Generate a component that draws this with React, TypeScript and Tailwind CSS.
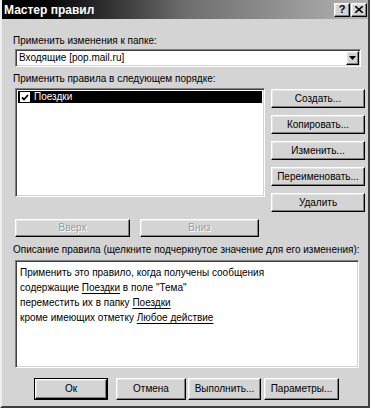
import React from 'react';

const raised =
  'border border-t-white border-l-white border-r-black border-b-black shadow-[inset_-1px_-1px_0_#808080,inset_1px_1px_0_#e6e6e6]';
const sunken =
  'border border-t-[#808080] border-l-[#808080] border-r-white border-b-white shadow-[inset_1px_1px_0_#404040,inset_-1px_-1px_0_#d4d4d4]';

const Btn: React.FC<{ label: string; className?: string; disabled?: boolean }> = ({ label, className = '', disabled }) => (
  <div
    className={`flex items-center justify-center bg-[#d4d4d4] text-[10px] leading-none ${raised} ${
      disabled ? 'text-[#9a9a9a] [text-shadow:1px_1px_0_#ffffff]' : 'text-black'
    } ${className}`}
  >
    {label}
  </div>
);

const Link: React.FC<{ children: React.ReactNode }> = ({ children }) => (
  <span className="underline underline-offset-2">{children}</span>
);

export default function App() {
  const sideButtons = ['Создать...', 'Копировать...', 'Изменить...', 'Переименовать...', 'Удалить'];

  return (
    <div className="w-[371px] h-[410px] bg-white font-['Liberation_Sans',Arial,sans-serif]">
      <div className="w-[370px] h-[408px] bg-[#d4d4d4] border-l-2 border-l-[#eeeeee] border-r-2 border-r-[#404040] border-b-2 border-b-[#404040] flex flex-col">
        {/* title bar */}
        <div className="h-[19px] flex items-center justify-between pl-[2px] pr-[1px] bg-gradient-to-r from-black via-[#6e6e6e] to-[#b4b4b4]">
          <span className="text-white font-bold text-[12px] leading-none">Мастер правил</span>
          <div className="flex gap-[1px]">
            <div className={`w-[16px] h-[14px] flex items-center justify-center bg-[#d4d4d4] font-bold text-[11px] leading-none ${raised}`}>?</div>
            <div className={`w-[16px] h-[14px] flex items-center justify-center bg-[#d4d4d4] ${raised}`}>
              <svg width="8" height="7" viewBox="0 0 8 7">
                <path d="M0 0 L8 7 M8 0 L0 7" stroke="black" strokeWidth="1.6" />
              </svg>
            </div>
          </div>
        </div>

        <div className="flex flex-col pl-[11px] pr-[7px] text-[10px] leading-[12px] text-black">
          <div className="mt-[16px]">Применить изменения к папке:</div>
          <div className={`mt-[2px] ml-[2px] h-[18px] bg-white flex items-center justify-between pl-[3px] pr-[1px] ${sunken}`}>
            <span>Входящие [pop.mail.ru]</span>
            <div className={`w-[13px] h-[14px] bg-[#d4d4d4] flex items-center justify-center ${raised}`}>
              <svg width="7" height="4" viewBox="0 0 7 4">
                <path d="M0 0 H7 L3.5 4 Z" fill="black" />
              </svg>
            </div>
          </div>

          <div className="mt-[6px]">Применить правила в следующем порядке:</div>

          <div className="mt-[3px] flex gap-[6px]">
            <div className="flex flex-col gap-[22px]">
              <div className={`ml-[2px] w-[250px] h-[109px] bg-white p-[2px] ${sunken}`}>
                <div className="h-[12px] bg-black flex items-center gap-[4px] pl-[2px]">
                  <div className="w-[10px] h-[10px] bg-white flex items-center justify-center">
                    <svg width="8" height="7" viewBox="0 0 8 7">
                      <path d="M1 3.5 L3 5.5 L7 1" stroke="black" strokeWidth="1.8" fill="none" />
                    </svg>
                  </div>
                  <span className="text-white">Поездки</span>
                </div>
              </div>
              <div className="ml-[2px] flex gap-[10px]">
                <Btn label="Вверх" disabled className="w-[115px] h-[18px]" />
                <Btn label="Вниз" disabled className="w-[119px] h-[18px]" />
              </div>
            </div>
            <div className="flex flex-col gap-[7px] pt-[1px]">
              {sideButtons.map((b) => (
                <Btn key={b} label={b} className="w-[94px] h-[19px]" />
              ))}
            </div>
          </div>

          <div className="mt-[7px] whitespace-nowrap">
            Описание правила (щелкните подчеркнутое значение для его изменения):
          </div>
          <div className={`mt-[4px] ml-[2px] mr-[2px] h-[108px] bg-white pl-[4px] pt-[4px] leading-[15px] ${sunken}`}>
            <div>Применить это правило, когда получены сообщения</div>
            <div>
              содержащие <Link>Поездки</Link> в поле "Тема"
            </div>
            <div>
              переместить их в папку <Link>Поездки</Link>
            </div>
            <div>
              кроме имеющих отметку <Link>Любое действие</Link>
            </div>
          </div>

          <div className="mt-[10px] ml-[21px] flex">
            <div className="border border-black">
              <Btn label="Ок" className="w-[72px] h-[20px]" />
            </div>
            <Btn label="Отмена" className="ml-[8px] w-[70px] h-[22px]" />
            <Btn label="Выполнить..." className="ml-[2px] w-[73px] h-[22px]" />
            <Btn label="Параметры..." className="ml-[3px] w-[75px] h-[22px]" />
          </div>
        </div>
      </div>
    </div>
  );
}
